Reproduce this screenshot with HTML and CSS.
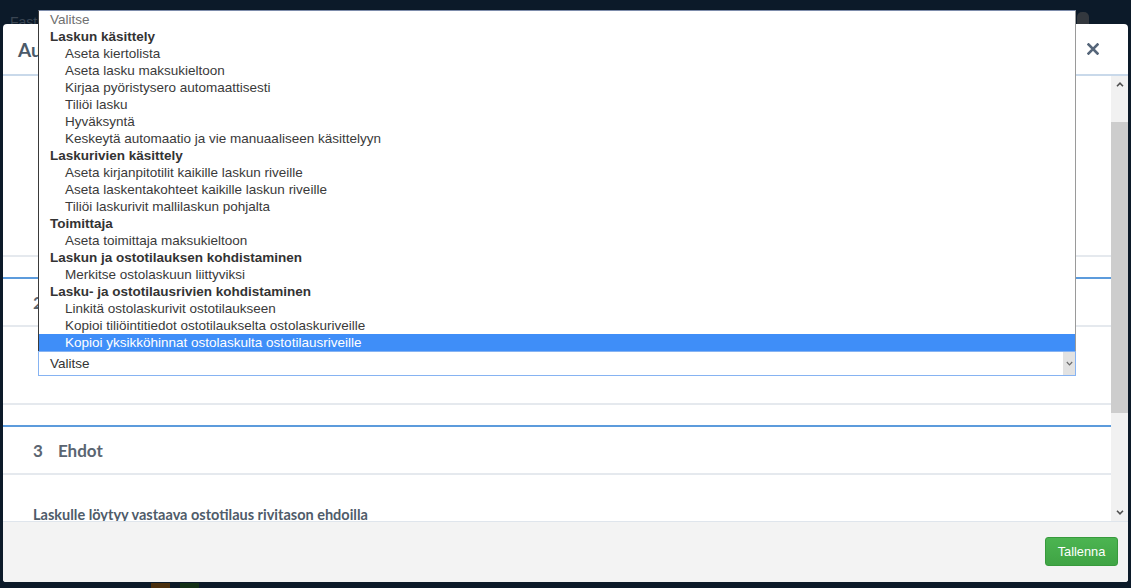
FILE: index.html
```html
<!DOCTYPE html>
<html lang="fi">
<head>
<meta charset="utf-8">
<title>Automaatiosääntö</title>
<link rel="stylesheet" href="styles.css">
</head>
<body>
<div class="page">
  <div class="topbar">
    <span class="brand">Fast</span>
    <span class="pill"></span>
  </div>

  <div class="modal">
    <div class="modal-header">
      <h4 class="modal-title">Automaatiosääntö</h4>
      <span class="close" aria-label="Sulje">
        <svg width="12" height="12" viewBox="0 0 12 12"><path d="M1.5 1.5 L10.5 10.5 M10.5 1.5 L1.5 10.5" stroke="#56667a" stroke-width="2.6" stroke-linecap="square" fill="none"/></svg>
      </span>
    </div>

    <div class="modal-main">
      <div class="content">
        <div class="section first">
          <div class="sec-content first-content"></div>
        </div>

        <div class="section">
          <div class="sec-head"><span class="num">2</span><span>Toimenpiteet</span></div>
          <div class="sec-content select-wrap">
            <div class="select">
              <span class="select-text">Valitse</span>
              <span class="select-arrow">
                <svg width="7" height="5" viewBox="0 0 7 5"><path d="M0.8 1 L3.5 3.8 L6.2 1" stroke="#6b6b6b" stroke-width="1.2" fill="none"/></svg>
              </span>
            </div>
          </div>
        </div>

        <div class="section">
          <div class="sec-head"><span class="num">3</span><span>Ehdot</span></div>
          <div class="sec-content cond">
            <p class="cond-text">Laskulle löytyy vastaava ostotilaus rivitason ehdoilla</p>
          </div>
        </div>
      </div>

      <div class="scrollbar">
        <div class="sb-btn">
          <svg width="8" height="5" viewBox="0 0 8 5"><path d="M1 4.2 L4 1.2 L7 4.2" stroke="#505050" stroke-width="1.6" fill="none"/></svg>
        </div>
        <div class="sb-track"><div class="sb-thumb"></div></div>
        <div class="sb-btn">
          <svg width="8" height="5" viewBox="0 0 8 5"><path d="M1 0.8 L4 3.8 L7 0.8" stroke="#505050" stroke-width="1.6" fill="none"/></svg>
        </div>
      </div>
    </div>

    <div class="modal-footer">
      <button class="btn-save">Tallenna</button>
    </div>
  </div>

  <div class="bottombar">
    <span class="sq brown"></span>
    <span class="sq green"></span>
  </div>

  <div class="dropdown">
    <div class="opt placeholder">Valitse</div>
    <div class="grp">Laskun käsittely</div>
    <div class="opt child">Aseta kiertolista</div>
    <div class="opt child">Aseta lasku maksukieltoon</div>
    <div class="opt child">Kirjaa pyöristysero automaattisesti</div>
    <div class="opt child">Tiliöi lasku</div>
    <div class="opt child">Hyväksyntä</div>
    <div class="opt child">Keskeytä automaatio ja vie manuaaliseen käsittelyyn</div>
    <div class="grp">Laskurivien käsittely</div>
    <div class="opt child">Aseta kirjanpitotilit kaikille laskun riveille</div>
    <div class="opt child">Aseta laskentakohteet kaikille laskun riveille</div>
    <div class="opt child">Tiliöi laskurivit mallilaskun pohjalta</div>
    <div class="grp">Toimittaja</div>
    <div class="opt child">Aseta toimittaja maksukieltoon</div>
    <div class="grp">Laskun ja ostotilauksen kohdistaminen</div>
    <div class="opt child">Merkitse ostolaskuun liittyviksi</div>
    <div class="grp">Lasku- ja ostotilausrivien kohdistaminen</div>
    <div class="opt child">Linkitä ostolaskurivit ostotilaukseen</div>
    <div class="opt child">Kopioi tiliöintitiedot ostotilaukselta ostolaskuriveille</div>
    <div class="opt child selected">Kopioi yksikköhinnat ostolaskulta ostotilausriveille</div>
  </div>
</div>
</body>
</html>
```

FILE: styles.css
```css
* { box-sizing: border-box; }

html, body {
  margin: 0;
  padding: 0;
}

body {
  width: 1131px;
  height: 588px;
  overflow: hidden;
  background: #0c1a29;
  font-family: Lato, "Liberation Sans", sans-serif;
}

.page {
  position: relative;
  width: 1131px;
  height: 588px;
  display: flex;
  flex-direction: column;
}

/* background page */
.topbar {
  height: 24px;
  flex: none;
  display: flex;
  align-items: flex-end;
  padding-left: 10px;
  overflow: hidden;
}

.brand {
  font: 14px/14px "Liberation Sans", sans-serif;
  color: #3a4552;
  margin-bottom: -5px;
}

.pill {
  margin-left: auto;
  margin-right: 42px;
  width: 12px;
  height: 12px;
  background: #33383e;
  border-radius: 5px 5px 0 0;
}

.bottombar {
  flex: 1;
  display: flex;
  gap: 10px;
  padding: 1px 0 0 151px;
}

.sq {
  width: 19px;
  height: 6px;
}
.sq.brown { background: #4a2f0e; }
.sq.green { background: #143017; }

/* modal */
.modal {
  margin-left: 3px;
  width: 1125px;
  height: 558px;
  flex: none;
  background: #fff;
  border-radius: 4px 4px 3px 3px;
  display: flex;
  flex-direction: column;
  overflow: hidden;
}

.modal-header {
  height: 52px;
  flex: none;
  border-bottom: 2px solid #c9d9ea;
  display: flex;
  align-items: center;
  padding: 0 29px 0 15px;
}

.modal-title {
  flex: 1;
  margin: 0;
  font-size: 19px;
  font-weight: 700;
  color: #4b5a69;
}

.close {
  display: flex;
  width: 12px;
  height: 12px;
}

.modal-main {
  height: 445px;
  flex: none;
  display: flex;
}

.content {
  flex: 1;
  overflow: hidden;
}

.section {
  border-top: 2px solid #5c9bdc;
  border-bottom: 2px solid #e5e9ee;
  margin-bottom: 20px;
}

.section.first {
  border-top: none;
}

.first-content {
  height: 179px;
}

.sec-head {
  height: 48px;
  border-bottom: 2px solid #e5e9ee;
  display: flex;
  align-items: center;
  gap: 15px;
  padding-left: 30px;
  font-size: 17px;
  font-weight: 700;
  color: #5a6571;
}

.select-wrap {
  padding: 24px 35px 27px;
}

.select {
  height: 25px;
  border: 1px solid #86b3f2;
  display: flex;
  align-items: stretch;
  background: #fff;
}

.select-text {
  flex: 1;
  padding-left: 11px;
  font: 13.5px/23px "Liberation Sans", sans-serif;
  color: #333;
}

.select-arrow {
  width: 12px;
  background: #e2e2e2;
  display: flex;
  align-items: center;
  justify-content: center;
}

.cond {
  padding: 30px 30px 0;
}

.cond-text {
  margin: 0;
  font-size: 14.5px;
  line-height: 20px;
  font-weight: 700;
  color: #4f5c6a;
}

/* scrollbar */
.scrollbar {
  width: 17px;
  flex: none;
  background: #f1f1f1;
  display: flex;
  flex-direction: column;
}

.sb-btn {
  height: 17px;
  flex: none;
  display: flex;
  align-items: center;
  justify-content: center;
}

.sb-track {
  flex: 1;
  padding-top: 29px;
}

.sb-thumb {
  height: 291px;
  background: #cdcdcd;
}

/* footer */
.modal-footer {
  flex: 1;
  background: #f3f3f3;
  border-top: 1px solid #dfe5ec;
  display: flex;
  justify-content: flex-end;
  align-items: flex-start;
  padding: 15px 10px 0 0;
}

.btn-save {
  width: 73px;
  height: 29px;
  border: 1px solid #379a3c;
  border-radius: 3px;
  background: linear-gradient(#4cb451, #3fa444);
  color: #fff;
  font: 12.8px "Liberation Sans", sans-serif;
  padding: 0;
}

/* open native select list */
.dropdown {
  position: absolute;
  left: 38px;
  top: 10px;
  width: 1038px;
  height: 341px;
  background: #fff;
  border: 1px solid #3a3a3a;
  border-top-color: #7d8cab;
  border-bottom: none;
  border-right-color: #9a9a9a;
  font: 13.5px/17px "Liberation Sans", sans-serif;
  color: #3a3a3a;
}

.opt, .grp {
  height: 17px;
  padding-left: 11px;
  white-space: nowrap;
}

.grp {
  font-weight: 700;
  color: #333;
}

.opt.placeholder {
  color: #707070;
}

.opt.child {
  padding-left: 26px;
}

.opt.selected {
  background: #3f8ef8;
  color: #fff;
}
```
